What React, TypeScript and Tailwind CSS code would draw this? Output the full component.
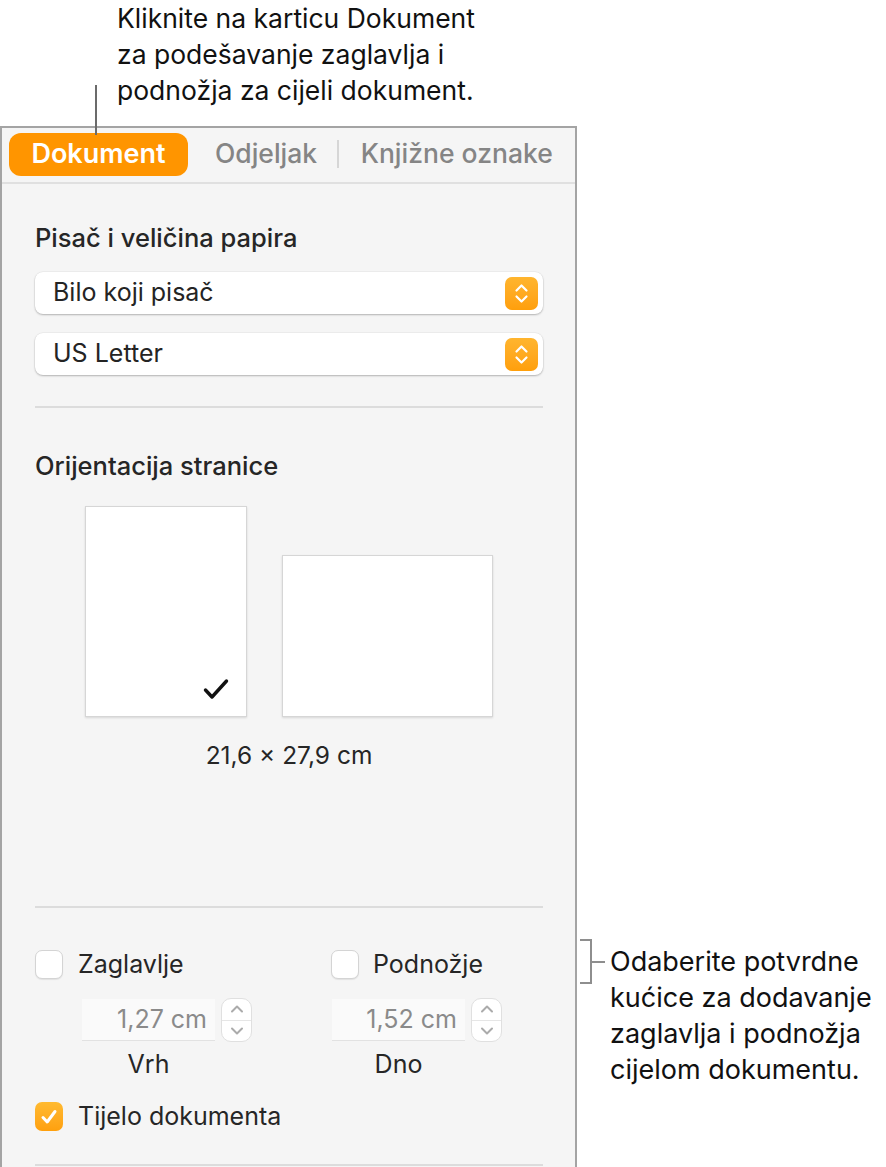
import React from 'react';

const Stepper: React.FC = () => (
  <div className="w-[33px] h-[33px] mr-[5px] rounded-[7px] bg-gradient-to-b from-[#ffb52e] to-[#ff9f0a] flex items-center justify-center">
    <svg width="33" height="33" viewBox="0 0 33 33" fill="none" stroke="white" strokeWidth="2.2" strokeLinecap="round" strokeLinejoin="round">
      <path d="M11.5 13.5 L16.5 8.5 L21.5 13.5" />
      <path d="M11.5 19.5 L16.5 24.5 L21.5 19.5" />
    </svg>
  </div>
);

const Popup: React.FC<{ label: string }> = ({ label }) => (
  <div className="h-[42px] rounded-[8px] bg-white shadow-[0_1px_2px_rgba(0,0,0,0.25),0_0_0_0.5px_rgba(0,0,0,0.06)] flex items-center justify-between pl-[18px]">
    <span className="text-[25px] text-[#242424]">{label}</span>
    <Stepper />
  </div>
);

const Checkbox: React.FC<{ checked?: boolean }> = ({ checked }) =>
  checked ? (
    <div className="w-[28px] h-[29px] rounded-[7px] bg-gradient-to-b from-[#ffba30] to-[#ffa00c] flex items-center justify-center shrink-0">
      <svg width="20" height="20" viewBox="0 0 20 20" fill="none" stroke="white" strokeWidth="3" strokeLinecap="round" strokeLinejoin="round">
        <path d="M4 10.5 L8.2 15 L16 4.5" />
      </svg>
    </div>
  ) : (
    <div className="w-[28px] h-[29px] rounded-[7px] bg-white border border-[#d4d4d4] shadow-[0_1px_1px_rgba(0,0,0,0.08)] shrink-0" />
  );

const NumberField: React.FC<{ value: string }> = ({ value }) => (
  <div className="flex items-center">
    <div className="w-[133px] h-[42px] bg-[#fafafa] border-b border-[#e2e2e2] flex items-center justify-end pr-[8px] text-[25px] text-[#8a8a8a]">
      {value}
    </div>
    <div className="ml-[6px] w-[31px] h-[44px] rounded-[10px] bg-white border border-[#e0e0e0] flex flex-col">
      <div className="flex-1 flex items-center justify-center border-b border-[#e6e6e6]">
        <svg width="16" height="10" viewBox="0 0 16 10" fill="none" stroke="#ababab" strokeWidth="2" strokeLinecap="round" strokeLinejoin="round">
          <path d="M3 7.5 L8 2.5 L13 7.5" />
        </svg>
      </div>
      <div className="flex-1 flex items-center justify-center">
        <svg width="16" height="10" viewBox="0 0 16 10" fill="none" stroke="#ababab" strokeWidth="2" strokeLinecap="round" strokeLinejoin="round">
          <path d="M3 2.5 L8 7.5 L13 2.5" />
        </svg>
      </div>
    </div>
  </div>
);

export default function App() {
  return (
    <div className="w-[886px] h-[1167px] bg-white overflow-hidden relative font-['Inter','Liberation_Sans',sans-serif] text-[#111]">
      {/* top callout */}
      <div className="h-[126px] pl-[117px] text-[26.5px] leading-[36px]">
        <p>Kliknite na karticu Dokument</p>
        <p>za podešavanje zaglavlja i</p>
        <p>podnožja za cijeli dokument.</p>
      </div>
      <div className="absolute left-[95px] top-[85px] w-[2px] h-[50px] bg-[#6b6b6b]" />

      <div className="flex">
        {/* inspector panel */}
        <div className="w-[577px] h-[1041px] bg-[#f5f5f5] border-l-2 border-r-2 border-t-2 border-[#a4a4a4] flex flex-col">
          <div className="h-[56px] border-b-2 border-[#e0e0e0] flex items-center pl-[7px] pb-[2px]">
            <div className="w-[179px] h-[43px] rounded-[12px] bg-[#ff9500] text-white text-[27px] font-semibold flex items-center justify-center">
              Dokument
            </div>
            <span className="ml-[27px] text-[26.5px] font-medium text-[#858585]">Odjeljak</span>
            <div className="ml-[20px] w-[1.5px] h-[28px] bg-[#d6d6d6]" />
            <span className="ml-[22px] text-[26.5px] font-medium text-[#858585]">Knjižne oznake</span>
          </div>

          <div className="pl-[33px] pr-[32px] flex flex-col text-[#262626]">
            <h3 className="mt-[40px] h-[28px] leading-[28px] text-[25.5px] font-medium">Pisač i veličina papira</h3>
            <div className="mt-[20px]">
              <Popup label="Bilo koji pisač" />
            </div>
            <div className="mt-[19px]">
              <Popup label="US Letter" />
            </div>
            <div className="mt-[31px] h-[2px] bg-[#dcdcdc]" />

            <h3 className="mt-[44px] h-[28px] leading-[28px] text-[25.5px] font-medium">Orijentacija stranice</h3>
            <div className="mt-[26px] flex items-end justify-center gap-[35px]">
              <div className="w-[162px] h-[211px] bg-white border border-[#d6d6d6] shadow-[0_1px_2px_rgba(0,0,0,0.12)] flex items-end justify-end pr-[17px] pb-[16px]">
                <svg width="26" height="22" viewBox="0 0 26 22" fill="none" stroke="#111" strokeWidth="3.4" strokeLinecap="round" strokeLinejoin="round">
                  <path d="M2.5 12 L9 19 L23.5 3" />
                </svg>
              </div>
              <div className="w-[211px] h-[162px] bg-white border border-[#d6d6d6] shadow-[0_1px_2px_rgba(0,0,0,0.12)]" />
            </div>
            <p className="mt-[24px] h-[28px] leading-[28px] text-[24.5px] text-center">21,6 × 27,9 cm</p>

            <div className="mt-[137px] h-[2px] bg-[#dcdcdc]" />

            <div className="mt-[42px] grid grid-cols-[296px_1fr]">
              <div className="flex flex-col">
                <div className="flex items-center h-[29px]">
                  <Checkbox />
                  <span className="ml-[15px] text-[25px]">Zaglavlje</span>
                </div>
                <div className="mt-[19px] ml-[47px]">
                  <NumberField value="1,27 cm" />
                </div>
                <p className="mt-[8px] w-[133px] ml-[47px] text-center text-[25px] leading-[28px]">Vrh</p>
              </div>
              <div className="flex flex-col">
                <div className="flex items-center h-[29px]">
                  <Checkbox />
                  <span className="ml-[14px] text-[25px]">Podnožje</span>
                </div>
                <div className="mt-[19px] ml-[1px]">
                  <NumberField value="1,52 cm" />
                </div>
                <p className="mt-[8px] w-[133px] ml-[1px] text-center text-[25px] leading-[28px]">Dno</p>
              </div>
            </div>

            <div className="mt-[24px] flex items-center h-[29px]">
              <Checkbox checked />
              <span className="ml-[15px] text-[25px]">Tijelo dokumenta</span>
            </div>
            <div className="mt-[33px] h-[2px] bg-[#dcdcdc]" />
          </div>
        </div>

        {/* right callout */}
        <div className="pt-[813px] pl-[3px] flex items-start">
          <div className="w-[12px] h-[45px] border-t-2 border-b-2 border-r-2 border-[#8e8e8e]" />
          <div className="mt-[22px] w-[13px] h-[2px] bg-[#8e8e8e]" />
          <div className="ml-[5px] mt-[5px] text-[27px] leading-[36px]">
            <p>Odaberite potvrdne</p>
            <p>kućice za dodavanje</p>
            <p>zaglavlja i podnožja</p>
            <p>cijelom dokumentu.</p>
          </div>
        </div>
      </div>
    </div>
  );
}
